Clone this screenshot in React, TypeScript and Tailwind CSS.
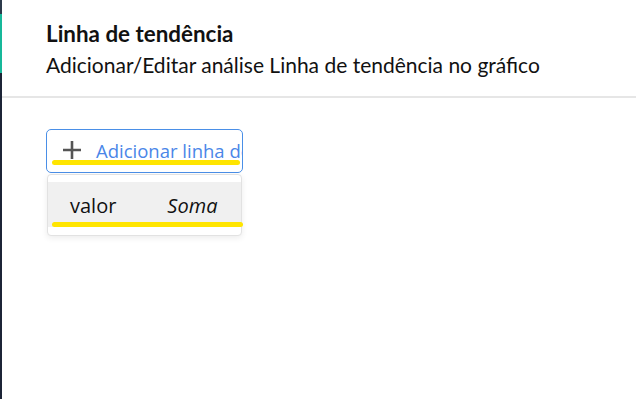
export default function App() {
  return (
    <div className="relative w-[636px] h-[399px] bg-white overflow-hidden flex">
      {/* left rail */}
      <div className="w-[2px] h-full flex flex-col shrink-0">
        <div className="h-[14px] bg-[#2c3a4b]" />
        <div className="h-[59px] bg-[#17b89a]" />
        <div className="flex-1 bg-[#1c2436]" />
      </div>

      <div className="flex-1 flex flex-col">
        {/* header */}
        <div className="pl-[44px] pt-[19px] h-[98px] border-b-2 border-[#e6e6e6] font-['Lato',sans-serif] text-[#111]">
          <h2 className="text-[22.4px] font-bold leading-[30px]">Linha de tendência</h2>
          <p className="text-[21px] leading-[30px] mt-[1px]">Adicionar/Editar análise Linha de tendência no gráfico</p>
        </div>

        {/* body */}
        <div className="pl-[44px] pt-[31px] font-['Open_Sans',sans-serif]">
          <div className="relative w-[197px] h-[44px] border border-[#4a8fe7] rounded-[5px] flex items-center pl-[15px] overflow-hidden">
            <svg width="20" height="20" viewBox="0 0 20 20" className="shrink-0 -mt-[2px]">
              <path d="M10 1v18M1 10h18" stroke="#555" strokeWidth="2.6" fill="none" />
            </svg>
            <span className="ml-[14px] text-[18.5px] text-[#4a86e8] whitespace-nowrap">Adicionar linha de tendência</span>
            <div className="absolute left-[5px] right-[2px] top-[30px] h-[5px] rounded-full bg-[#ffe500]" />
          </div>

          <div className="relative ml-[1px] w-[195px] h-[62px] mt-[1px] bg-white border border-[#e2e2e2] rounded-[4px] shadow-[0_2px_6px_rgba(0,0,0,0.08)] pt-[7px]">
            <div className="h-[45px] bg-[#f0f0f0] flex items-center text-[20px] text-[#111] pt-[3px]">
              <span className="ml-[22px]">valor</span>
              <span className="ml-[51px] italic">Soma</span>
            </div>
            <div className="absolute left-[4px] right-[-2px] top-[47px] h-[5px] rounded-full bg-[#ffe500]" />
          </div>
        </div>
      </div>
    </div>
  );
}
